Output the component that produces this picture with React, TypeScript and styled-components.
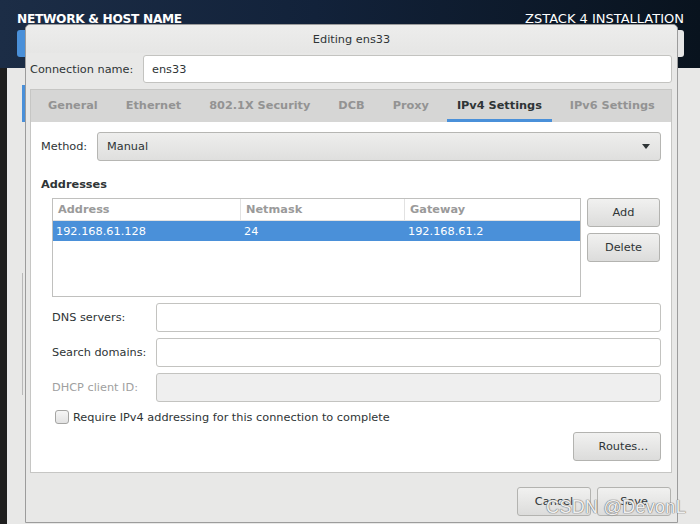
import React from 'react';
import styled, { createGlobalStyle } from 'styled-components';

const GlobalStyle = createGlobalStyle`
  html, body {
    margin: 0;
    padding: 0;
    background: #e8e8e7;
  }
  * {
    box-sizing: border-box;
  }
`;

const font = `"DejaVu Sans", "Noto Sans", sans-serif`;

const Screen = styled.div`
  position: relative;
  width: 700px;
  height: 524px;
  overflow: hidden;
  font-family: ${font};
  font-size: 11.3px;
  color: #2e3436;
  display: flex;
  flex-direction: column;
`;

const Header = styled.div`
  height: 68px;
  flex-shrink: 0;
  background: linear-gradient(90deg, #1c2d46 0%, #12223a 45%, #09131e 100%);
  display: flex;
  justify-content: space-between;
  padding: 11px 16px 0 17px;
  color: #ffffff;
`;

const HeaderCol = styled.div<{ $right?: boolean }>`
  display: flex;
  flex-direction: column;
  align-items: ${(p) => (p.$right ? 'flex-end' : 'flex-start')};
  gap: 3px;
`;

const HeaderTitle = styled.div<{ $bold?: boolean }>`
  font-size: ${(p) => (p.$bold ? '12.2px' : '13px')};
  font-weight: ${(p) => (p.$bold ? 'bold' : 'normal')};
  letter-spacing: ${(p) => (p.$bold ? '-0.3px' : '0')};
  line-height: 16px;
  white-space: nowrap;
`;

const HeaderButton = styled.div<{ $blue?: boolean }>`
  width: 60px;
  height: 27px;
  border-radius: 3px;
  background: ${(p) => (p.$blue ? '#4a90d9' : '#e6e6e6')};
`;

const Body = styled.div`
  flex: 1;
  display: flex;
`;

const DarkStrip = styled.div`
  width: 7px;
  background: #1e1e1e;
`;

const BackPane = styled.div`
  flex: 1;
  padding: 17px 0 0 15px;
  display: flex;
  flex-direction: column;
`;

const BackBlue = styled.div`
  width: 3px;
  height: 37px;
  background: #4a90d9;
`;

const BackLine = styled.div`
  width: 1px;
  height: 122px;
  margin-top: 151px;
  background: #b8b8b8;
`;

const Dialog = styled.div`
  position: absolute;
  left: 25px;
  top: 24px;
  width: 653px;
  height: 499px;
  background: #e8e8e7;
  border: 1px solid #9c9c9c;
  border-radius: 5px 5px 0 0;
  display: flex;
  flex-direction: column;
  padding: 0 5px 0 4px;
`;

const TitleBar = styled.div`
  height: 28px;
  margin: 0 -5px 0 -4px;
  display: flex;
  align-items: center;
  justify-content: center;
  color: #2e3436;
  background: linear-gradient(#ededec, #e6e6e5);
  border-radius: 5px 5px 0 0;
`;

const ConnRow = styled.div`
  display: flex;
  align-items: center;
  height: 28px;
  margin-top: 2px;
`;

const ConnLabel = styled.div`
  width: 113px;
  flex-shrink: 0;
`;

const TextInput = styled.div<{ $disabled?: boolean }>`
  flex: 1;
  height: 100%;
  background: ${(p) => (p.$disabled ? '#efefef' : '#ffffff')};
  border: 1px solid #c3c3c0;
  border-radius: 3px;
  display: flex;
  align-items: center;
  padding: 0 8px;
  color: #2e3436;
`;

const Notebook = styled.div`
  margin-top: 6px;
  height: 384px;
  border: 1px solid #c6c6c4;
  display: flex;
  flex-direction: column;
`;

const TabBar = styled.div`
  height: 32px;
  flex-shrink: 0;
  background: #d6d6d5;
  display: flex;
  gap: 8px;
  padding-left: 7px;
`;

const Tab = styled.div<{ $active?: boolean }>`
  display: flex;
  align-items: center;
  padding: 2px 10px 0;
  font-weight: bold;
  color: ${(p) => (p.$active ? '#2e3436' : '#939393')};
  border-bottom: 3px solid ${(p) => (p.$active ? '#4a90d9' : 'transparent')};
  white-space: nowrap;
`;

const Panel = styled.div`
  flex: 1;
  background: #ffffff;
  padding: 10px 10px 0 10px;
  display: flex;
  flex-direction: column;
`;

const MethodRow = styled.div`
  display: flex;
  align-items: center;
  height: 29px;
`;

const MethodLabel = styled.div`
  width: 56px;
  flex-shrink: 0;
`;

const Combo = styled.div`
  flex: 1;
  height: 100%;
  border: 1px solid #b6b6b3;
  border-radius: 3px;
  background: linear-gradient(#eeeeed, #dfdfde);
  display: flex;
  align-items: center;
  justify-content: space-between;
  padding: 0 10px 0 9px;
`;

const Arrow = styled.div`
  width: 0;
  height: 0;
  border-left: 4px solid transparent;
  border-right: 4px solid transparent;
  border-top: 5px solid #2e3436;
`;

const SectionTitle = styled.div`
  font-weight: bold;
  margin-top: 17px;
  line-height: 14px;
`;

const Indent = styled.div`
  padding-left: 11px;
  display: flex;
  flex-direction: column;
`;

const AddressBlock = styled.div`
  display: flex;
  gap: 6px;
  margin-top: 6px;
`;

const Table = styled.div`
  width: 529px;
  height: 99px;
  border: 1px solid #c0c0be;
  background: #ffffff;
  display: flex;
  flex-direction: column;
`;

const TableRow = styled.div<{ $head?: boolean; $selected?: boolean }>`
  display: grid;
  grid-template-columns: 188px 164px 1fr;
  height: ${(p) => (p.$head ? '22px' : '20px')};
  background: ${(p) => (p.$selected ? '#4a90d9' : '#ffffff')};
  color: ${(p) => (p.$head ? '#9a9a9a' : p.$selected ? '#ffffff' : '#2e3436')};
  font-weight: ${(p) => (p.$head ? 'bold' : 'normal')};
  border-bottom: ${(p) => (p.$head ? '1px solid #e2e2e2' : 'none')};
`;

const Cell = styled.div<{ $head?: boolean; $last?: boolean }>`
  display: flex;
  align-items: center;
  padding-left: ${(p) => (p.$head ? '5px' : '3px')};
  padding-top: ${(p) => (p.$head ? '0' : '1px')};
  border-right: ${(p) => (p.$head && !p.$last ? '1px solid #e2e2e2' : 'none')};
`;

const SideButtons = styled.div`
  display: flex;
  flex-direction: column;
  gap: 6px;
`;

const Button = styled.div<{ $width: number; $align?: string }>`
  width: ${(p) => p.$width}px;
  height: 29px;
  border: 1px solid #b3b3b0;
  border-radius: 3px;
  background: linear-gradient(#f1f1f0, #dcdcdb);
  display: flex;
  align-items: center;
  justify-content: ${(p) => p.$align || 'center'};
  padding: 0 12px;
  color: #2e3436;
  flex-shrink: 0;
`;

const FieldStack = styled.div`
  display: flex;
  flex-direction: column;
  gap: 6px;
  margin-top: 6px;
`;

const FieldRow = styled.div`
  display: flex;
  align-items: center;
  height: 29px;
`;

const FieldLabel = styled.div<{ $disabled?: boolean }>`
  width: 104px;
  flex-shrink: 0;
  color: ${(p) => (p.$disabled ? '#a0a0a0' : '#2e3436')};
`;

const CheckRow = styled.div`
  display: flex;
  align-items: center;
  gap: 4px;
  margin-top: 8px;
  padding-left: 3px;
`;

const CheckBox = styled.div`
  width: 14px;
  height: 14px;
  border: 1px solid #a5a5a3;
  border-radius: 3px;
  background: linear-gradient(#f6f6f6, #e2e2e2);
`;

const RoutesRow = styled.div`
  display: flex;
  justify-content: flex-end;
  margin-top: 8px;
`;

const Footer = styled.div`
  flex: 1;
  display: flex;
  justify-content: flex-end;
  align-items: flex-start;
  gap: 6px;
  padding-top: 14px;
  padding-right: 1px;
`;

// CSDN watermark that sits over the dialog buttons
const Watermark = styled.div`
  position: absolute;
  right: 14px;
  bottom: 6px;
  font-family: "Liberation Sans", "Noto Sans", sans-serif;
  font-size: 18px;
  color: rgba(255, 255, 255, 0.9);
  text-shadow: 0 0 1px #7a7a7a, 0 0 1px #7a7a7a, 0 0 1px #7a7a7a;
  letter-spacing: 0.3px;
`;

const tabs = ['General', 'Ethernet', '802.1X Security', 'DCB', 'Proxy', 'IPv4 Settings', 'IPv6 Settings'];

const fields = [
  { label: 'DNS servers:', disabled: false },
  { label: 'Search domains:', disabled: false },
  { label: 'DHCP client ID:', disabled: true },
];

const App = (): JSX.Element => (
  <>
    <GlobalStyle />
    <Screen>
      <Header>
        <HeaderCol>
          <HeaderTitle $bold>NETWORK &amp; HOST NAME</HeaderTitle>
          <HeaderButton $blue />
        </HeaderCol>
        <HeaderCol $right>
          <HeaderTitle>ZSTACK 4 INSTALLATION</HeaderTitle>
          <HeaderButton />
        </HeaderCol>
      </Header>
      <Body>
        <DarkStrip />
        <BackPane>
          <BackBlue />
          <BackLine />
        </BackPane>
      </Body>

      <Dialog>
        <TitleBar>Editing ens33</TitleBar>
        <ConnRow>
          <ConnLabel>Connection name:</ConnLabel>
          <TextInput>ens33</TextInput>
        </ConnRow>
        <Notebook>
          <TabBar>
            {tabs.map((t) => (
              <Tab key={t} $active={t === 'IPv4 Settings'}>
                {t}
              </Tab>
            ))}
          </TabBar>
          <Panel>
            <MethodRow>
              <MethodLabel>Method:</MethodLabel>
              <Combo>
                <span>Manual</span>
                <Arrow />
              </Combo>
            </MethodRow>
            <SectionTitle>Addresses</SectionTitle>
            <Indent>
              <AddressBlock>
                <Table>
                  <TableRow $head>
                    <Cell $head>Address</Cell>
                    <Cell $head>Netmask</Cell>
                    <Cell $head $last>Gateway</Cell>
                  </TableRow>
                  <TableRow $selected>
                    <Cell>192.168.61.128</Cell>
                    <Cell>24</Cell>
                    <Cell>192.168.61.2</Cell>
                  </TableRow>
                </Table>
                <SideButtons>
                  <Button $width={73}>Add</Button>
                  <Button $width={73}>Delete</Button>
                </SideButtons>
              </AddressBlock>
              <FieldStack>
                {fields.map((f) => (
                  <FieldRow key={f.label}>
                    <FieldLabel $disabled={f.disabled}>{f.label}</FieldLabel>
                    <TextInput $disabled={f.disabled} />
                  </FieldRow>
                ))}
              </FieldStack>
              <CheckRow>
                <CheckBox />
                <span>Require IPv4 addressing for this connection to complete</span>
              </CheckRow>
              <RoutesRow>
                <Button $width={88} $align="flex-end">Routes...</Button>
              </RoutesRow>
            </Indent>
          </Panel>
        </Notebook>
        <Footer>
          <Button $width={74}>Cancel</Button>
          <Button $width={74}>Save</Button>
        </Footer>
      </Dialog>
      <Watermark>CSDN @DevonL</Watermark>
    </Screen>
  </>
);

export default App;
